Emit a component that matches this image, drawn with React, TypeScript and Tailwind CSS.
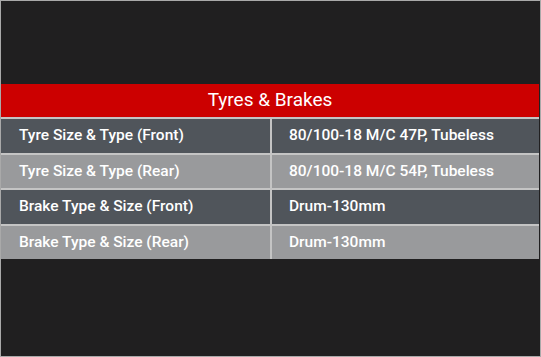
import React from 'react';

const rows: [string, string][] = [
  ['Tyre Size & Type (Front)', '80/100-18 M/C 47P, Tubeless'],
  ['Tyre Size & Type (Rear)', '80/100-18 M/C 54P, Tubeless'],
  ['Brake Type & Size (Front)', 'Drum-130mm'],
  ['Brake Type & Size (Rear)', 'Drum-130mm'],
];

const App: React.FC = () => {
  return (
    <div
      className="w-[541px] h-[357px] bg-[#201f20] border border-[#a9a9a9] pt-[83px] text-white"
      style={{ fontFamily: 'Roboto, "Liberation Sans", Arial, sans-serif' }}
    >
      {/* Specs table */}
      <div className="bg-[#c4c4c4] mr-px flex flex-col gap-[2px]">
        <div className="h-[33px] bg-[#cc0000] flex items-center justify-center text-[19px]">
          Tyres &amp; Brakes
        </div>
        {rows.map(([label, value], i) => {
          const bg = i % 2 === 0 ? 'bg-[#50555b]' : 'bg-[#999a9c]';
          return (
            <div
              key={label}
              className={`grid grid-cols-[269px_1fr] gap-[2px] text-[15.5px] font-medium ${i % 2 === 0 ? 'h-[34px]' : 'h-[33px]'}`}
            >
              <div className={`flex items-center pl-[18px] ${bg}`}>{label}</div>
              <div className={`flex items-center pl-[17px] ${bg}`}>{value}</div>
            </div>
          );
        })}
      </div>
    </div>
  );
};

export default App;
